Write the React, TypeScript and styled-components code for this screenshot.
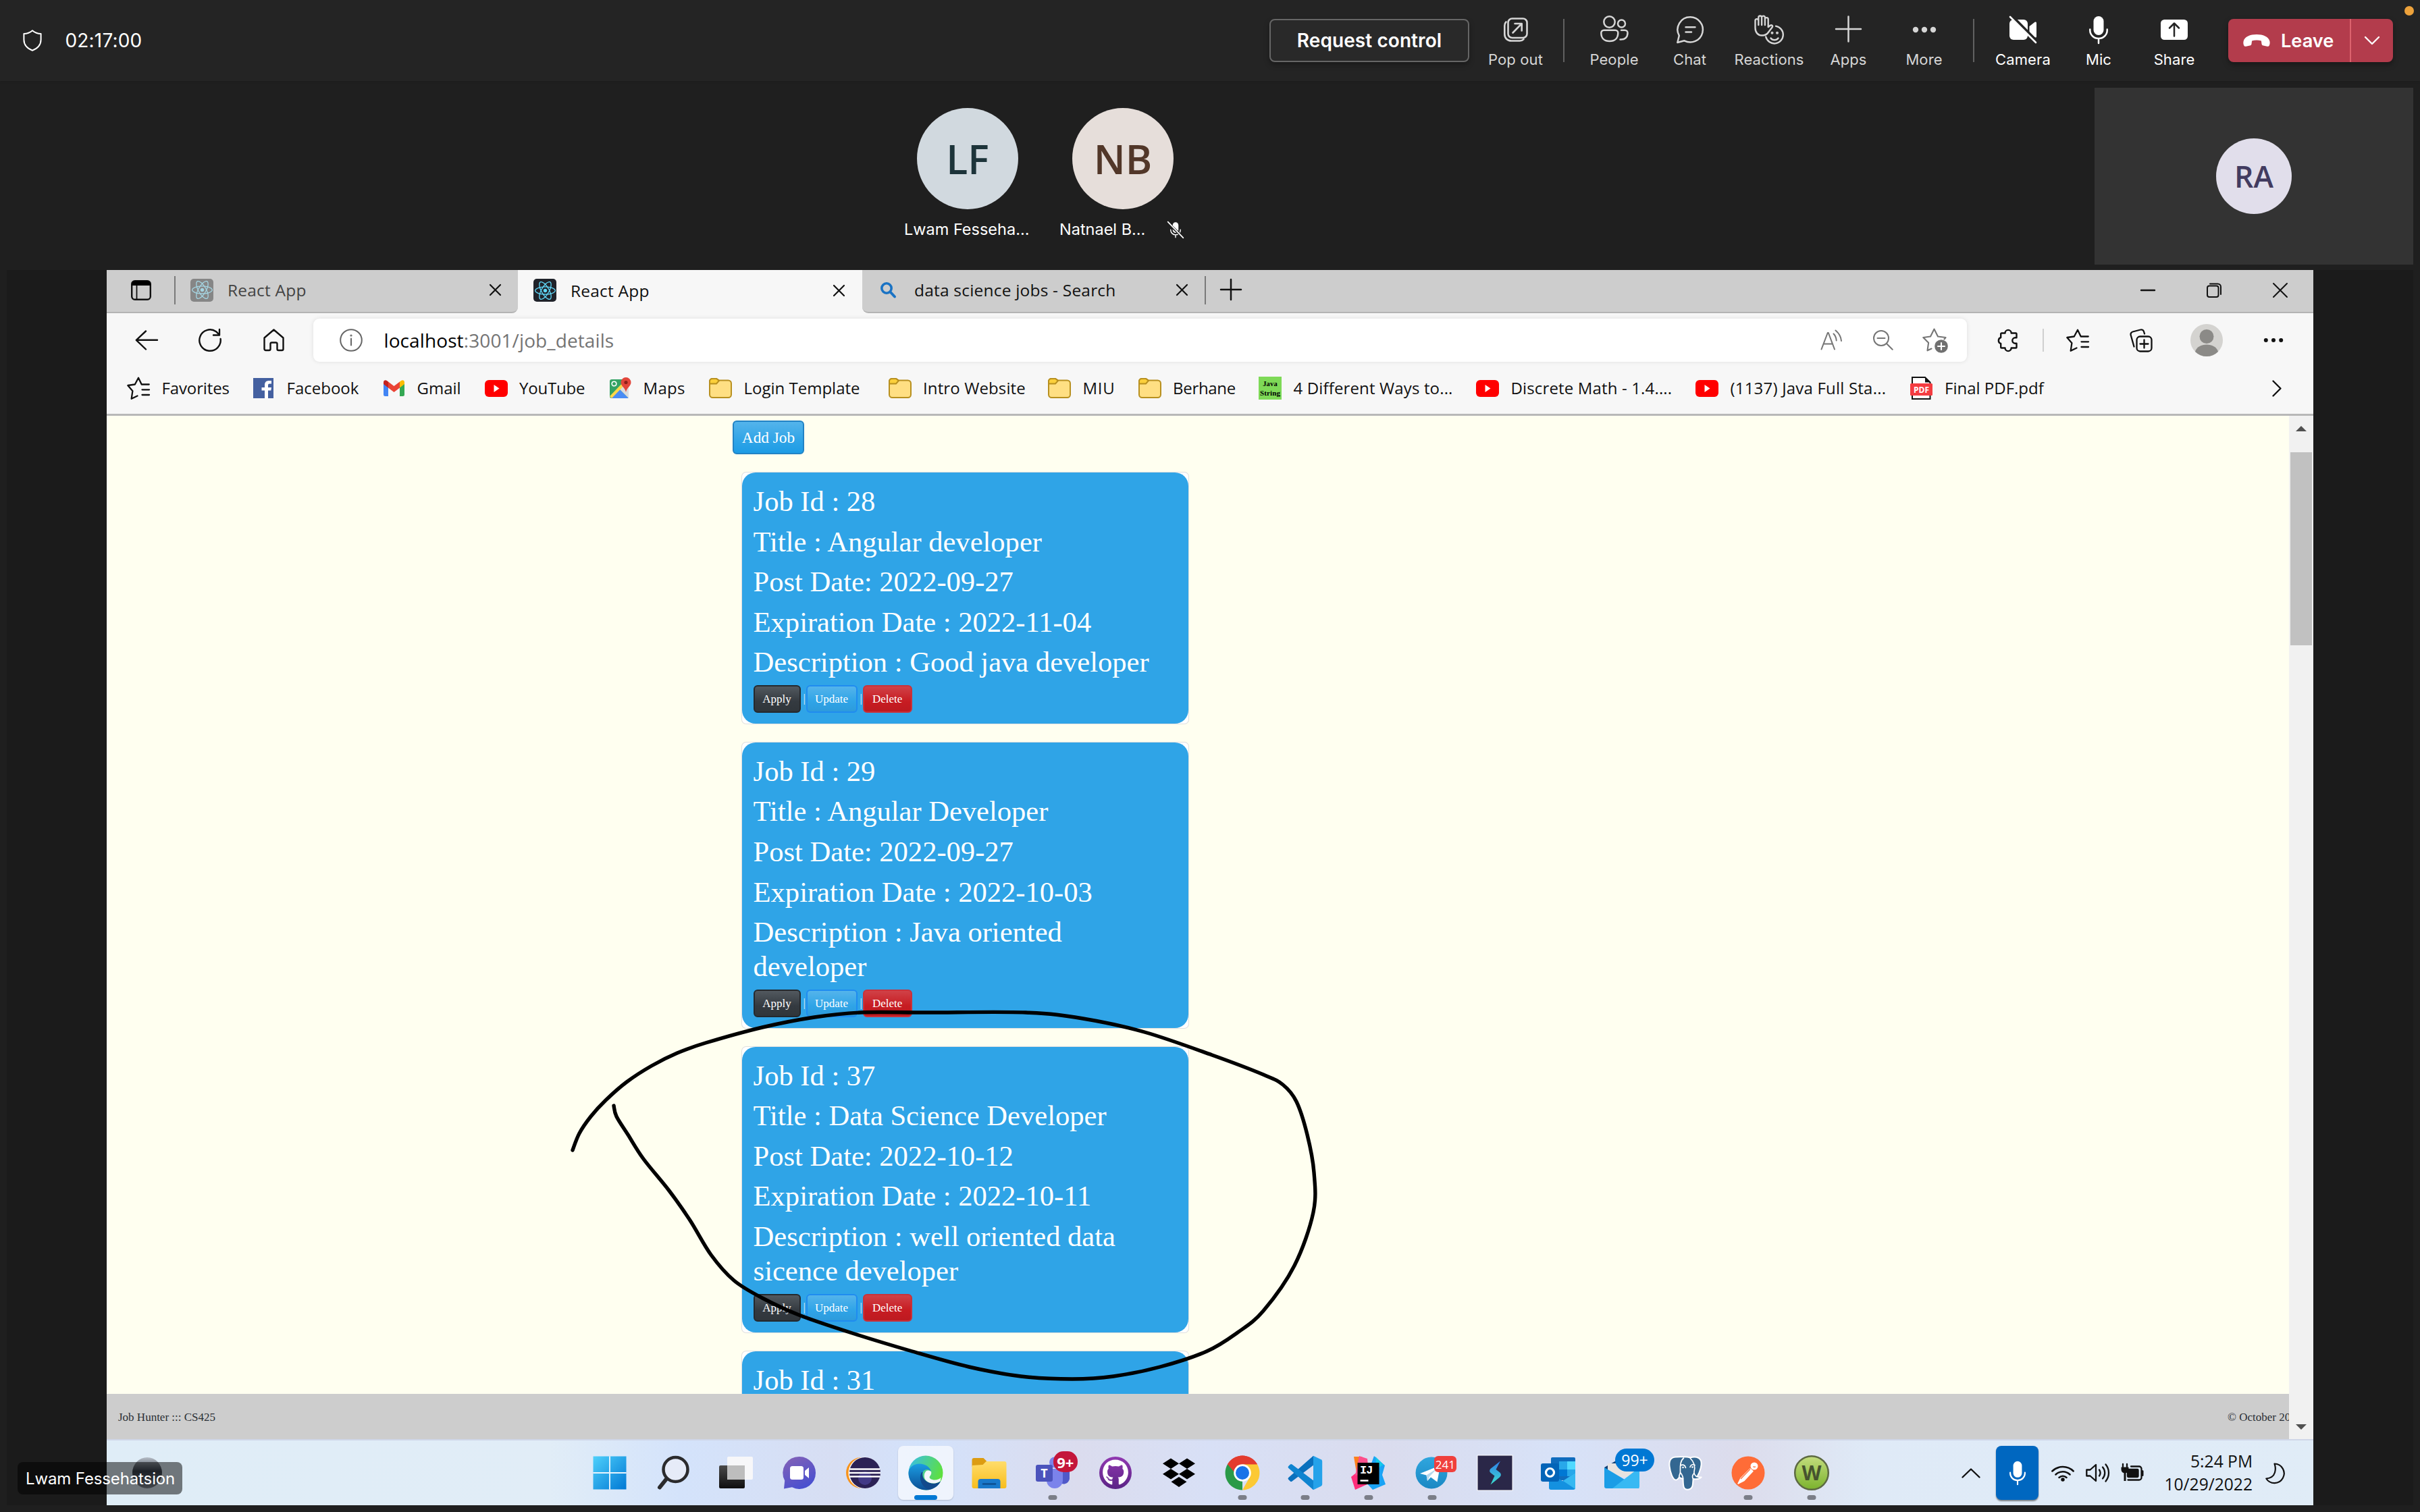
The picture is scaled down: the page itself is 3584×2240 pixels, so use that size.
import React from "react";
import styled, { createGlobalStyle, css } from "styled-components";
import { FaReact, FaGithub } from "react-icons/fa";

const UI = `"Open Sans", "Noto Sans", sans-serif`;
const MEETING = `Inter, "Noto Sans", sans-serif`;
const SERIF = `"Liberation Serif", "Times New Roman", serif`;

const GlobalStyle = createGlobalStyle`
  *, *::before, *::after { box-sizing: border-box; }
  html, body { margin: 0; padding: 0; background: #1f1f1f; }
  svg { display: block; flex: none; overflow: visible; }
  button { margin: 0; padding: 0; border: 0; background: none; font: inherit; color: inherit; }
  h6, p { margin: 0; font-weight: 400; }
`;

/* ---------- Meeting shell ---------- */

const Meeting = styled.div`
  position: relative;
  display: flex;
  flex-direction: column;
  width: 3584px;
  height: 2240px;
  overflow: hidden;
  background: #1f1f1f;
  color: #fff;
  font-family: ${MEETING};
`;

const Header = styled.header`
  display: flex;
  align-items: center;
  height: 120px;
  flex: none;
  padding: 0 40px 0 34px;
  background: #242424;
  box-shadow: 0 1px 3px rgba(0, 0, 0, 0.14);
`;

const Timer = styled.span`
  margin-left: 34.5px;
  font-size: 28px;
  letter-spacing: 0.17px;
`;

const Controls = styled.div`
  display: flex;
  align-items: center;
  margin-left: auto;
`;

const RequestButton = styled.button`
  width: 296px;
  height: 64px;
  border: 2px solid #666;
  border-radius: 8px;
  background: #292929;
  box-shadow: 0 4px 8px rgba(0, 0, 0, 0.3);
  font-size: 28px;
  font-weight: 600;
  letter-spacing: 0.08px;
`;

const Tool = styled.button<{ $width: number; $bright?: boolean }>`
  display: flex;
  flex-direction: column;
  align-items: center;
  gap: 8px;
  width: ${(p) => p.$width}px;
  height: 120px;
  padding-top: 22px;
  color: ${(p) => (p.$bright ? "#fff" : "#d6d6d6")};
  font-size: 22px;
  line-height: 28px;
  letter-spacing: 0.1px;
`;

const HeaderRule = styled.span<{ $left: number; $right: number }>`
  width: 2px;
  height: 64px;
  margin: 0 ${(p) => p.$right}px 0 ${(p) => p.$left}px;
  background: #616161;
`;

const LeaveGroup = styled.div`
  display: flex;
  width: 244px;
  height: 64px;
  margin-left: 24px;
  border-radius: 8px;
  background: #b33c4c;
  box-shadow: 0 4px 8px rgba(0, 0, 0, 0.35);
`;

const LeaveButton = styled.button`
  display: flex;
  align-items: center;
  gap: 16px;
  width: 182px;
  padding-left: 22px;
  border-right: 2px solid #dc626d;
  font-size: 27.2px;
  font-weight: 600;
`;

const LeaveMenu = styled.button`
  display: flex;
  flex: 1;
  align-items: center;
  justify-content: center;
`;

const RecordingDot = styled.span`
  position: absolute;
  top: 9px;
  right: 9px;
  width: 14px;
  height: 14px;
  border-radius: 50%;
  background: #eda23b;
`;

const Roster = styled.section`
  display: flex;
  height: 280px;
  flex: none;
  gap: 30px;
  padding: 10px 10px 8px 1333px;
`;

const Person = styled.div`
  width: 200px;
  padding-top: 30px;
`;

const Avatar = styled.div<{ $size: number; $bg: string; $fg: string; $font: number }>`
  display: flex;
  align-items: center;
  justify-content: center;
  width: ${(p) => p.$size}px;
  height: ${(p) => p.$size}px;
  margin: 0 auto;
  padding-bottom: 1px;
  border-radius: 50%;
  background: ${(p) => p.$bg};
  color: ${(p) => p.$fg};
  font: 600 ${(p) => p.$font}px ${UI};
`;

const PersonName = styled.div`
  display: flex;
  align-items: center;
  justify-content: space-between;
  margin-top: 15px;
  padding: 0 10px 0 6px;
  font-size: 23.5px;
  line-height: 30px;
  white-space: nowrap;
`;

const SelfTile = styled.div`
  display: flex;
  align-items: center;
  width: 472px;
  height: 262px;
  margin-left: auto;
  background: #333;
`;

const Stage = styled.main`
  height: 1830px;
  flex: none;
  margin: 0 10px;
  padding: 0 148px;
  background: #1b1b1b;
`;

const SharedScreen = styled.div`
  display: flex;
  flex-direction: column;
  height: 100%;
  color: #111;
  font-family: ${UI};
`;

const PresenterTag = styled.div`
  position: absolute;
  left: 26px;
  top: 2166px;
  display: flex;
  align-items: center;
  width: 244px;
  height: 48px;
  padding-left: 12px;
  border-radius: 8px;
  background: rgba(0, 0, 0, 0.5);
  font-size: 24px;
  letter-spacing: -0.13px;
  white-space: nowrap;
`;

const Ink = styled.svg`
  position: absolute;
  left: 0;
  top: 0;
  pointer-events: none;
`;

/* ---------- Browser chrome ---------- */

const TabStrip = styled.div`
  display: flex;
  height: 64px;
  flex: none;
  background: #f7f7f7;
`;

const StripPart = styled.div<{ $side: "left" | "right" }>`
  display: flex;
  align-items: center;
  height: 64px;
  padding-bottom: 3px;
  border-bottom: 2px solid #b4b4b4;
  background: #cdcdcd;
  ${(p) =>
    p.$side === "left"
      ? css`
          width: 609px;
          padding-left: 36px;
          border-bottom-right-radius: 9px;
        `
      : css`
          flex: 1;
          border-bottom-left-radius: 9px;
        `}
`;

const Tab = styled.div<{ $width: number; $active?: boolean; $muted?: boolean }>`
  display: flex;
  align-items: center;
  width: ${(p) => p.$width}px;
  height: ${(p) => (p.$active ? 60 : 59)}px;
  padding: 0 ${(p) => (p.$active ? 26 : 25)}px 0 ${(p) => (p.$active ? 23 : 22)}px;
  color: ${(p) => (p.$muted ? "#444" : "#111")};
  font-size: 24.5px;
  letter-spacing: 0.2px;
  white-space: nowrap;
`;

const TabTitle = styled.span`
  flex: 1;
  padding-left: 21px;
`;

const TabRule = styled.span<{ $left?: number }>`
  width: 2px;
  height: 42px;
  margin-left: ${(p) => p.$left ?? 0}px;
  background: #7a7a7a;
`;

const Favicon = styled.span<{ $faded?: boolean }>`
  display: flex;
  align-items: center;
  justify-content: center;
  width: 34px;
  height: 34px;
  border-radius: 5px;
  background: ${(p) => (p.$faded ? "#868686" : "#20232a")};
  color: ${(p) => (p.$faded ? "#a5d5e2" : "#61dafb")};
`;

const NewTab = styled.button`
  margin-left: 22px;
`;

const WindowButtons = styled.div`
  display: flex;
  margin-left: auto;
`;

const WindowButton = styled.button`
  display: flex;
  justify-content: center;
  align-items: center;
  width: 98px;
  height: 58px;
`;

const Toolbar = styled.div`
  display: flex;
  height: 82px;
  flex: none;
  padding: 8px 0 10px 12px;
  background: #f7f7f7;
`;

const ToolbarButton = styled.button<{ $width: number }>`
  display: flex;
  align-items: center;
  justify-content: center;
  width: ${(p) => p.$width}px;
  height: 64px;
`;

const AddressBar = styled.div`
  display: flex;
  align-items: center;
  width: 2449px;
  height: 64px;
  margin: 0 13px 0 12px;
  padding: 0 9px 0 38.5px;
  border-radius: 9px;
  background: #fff;
  box-shadow: 0 0 6px rgba(0, 0, 0, 0.1);
`;

const Url = styled.span`
  flex: 1;
  padding-left: 32px;
  color: #747474;
  font-size: 28px;
  letter-spacing: 0.1px;
  b { color: #000; font-weight: 400; }
`;

const ToolbarRule = styled.span`
  width: 2px;
  height: 34px;
  margin: 15px 3px 0 5px;
  background: #cfcfcf;
`;

const Bookmarks = styled.nav`
  display: flex;
  align-items: center;
  height: 70px;
  flex: none;
  padding: 0 47px 9px 30px;
  border-bottom: 3px solid #b8b8b8;
  background: #f7f7f7;
`;

const Bookmark = styled.span<{ $width?: number; $ls?: number }>`
  display: flex;
  align-items: center;
  gap: 17.5px;
  width: ${(p) => (p.$width ? `${p.$width}px` : "auto")};
  color: #111;
  font-size: 24px;
  letter-spacing: ${(p) => p.$ls ?? 0}px;
  line-height: 32px;
  white-space: nowrap;
`;

const BookmarkIcon = styled.span`
  display: flex;
  justify-content: center;
  width: 34px;
  flex: none;
`;

const BookmarkLabel = styled.span`
  padding-bottom: 1px;
`;

const MoreBookmarks = styled.span`
  margin-left: auto;
`;

/* ---------- Job page ---------- */

const Viewport = styled.div`
  display: flex;
  height: 1516px;
  flex: none;
`;

const Page = styled.div`
  display: flex;
  flex: 1;
  flex-direction: column;
  min-width: 0;
  overflow: hidden;
  background: #fffff0;
  font-family: ${SERIF};
`;

const JobList = styled.div`
  display: flex;
  flex-direction: column;
  align-items: flex-start;
  gap: 26.2px;
  height: 1449px;
  padding: 7px 0 0 940px;
  overflow: hidden;
`;

const AddJob = styled.button`
  width: 106px;
  height: 50px;
  flex: none;
  margin-left: -13px;
  border: 2px solid #2283c5;
  border-radius: 6px;
  background: linear-gradient(#54b4eb, #2fa4e7 60%, #1d9ce5);
  color: #fff;
  font-size: 23.3px;
`;

const Card = styled.article`
  width: 663px;
  flex: none;
  border: 1.5px solid rgba(0, 0, 0, 0.125);
  border-radius: 7px;
  background: #fff;
`;

const CardBody = styled.div`
  padding: 16.8px 16.6px 15.8px;
  border-radius: 20px;
  background: #2fa4e7;
  color: #fff;
`;

const Field = styled.h6`
  margin-bottom: 8.4px;
  font-size: 42.6px;
  line-height: 51.2px;
  letter-spacing: -0.02px;
`;

const Actions = styled.div`
  display: flex;
  height: 41px;
  align-items: center;
  font-size: 17px;
`;

const tones = {
  dark: "border-color: #24292e; background: linear-gradient(#52595f, #343a40 60%, #30363b);",
  primary: "border-color: #1f8cf0; background: linear-gradient(#54b4eb, #2fa4e7 60%, #2d9bdc);",
  danger: "border-color: #c8323b; background: linear-gradient(#d04147, #c71c22 60%, #bd1a20);",
};

const ActionButton = styled.button<{ $width: number; $tone: keyof typeof tones }>`
  width: ${(p) => p.$width}px;
  height: 41px;
  border: 2px solid;
  border-radius: 6px;
  color: #fff;
  font-size: 17px;
  line-height: 38px;
  ${(p) => tones[p.$tone]}
`;

const Pipe = styled.span`
  width: 8px;
  padding-left: 4px;
  opacity: 0.85;
`;

const Footer = styled.footer`
  display: flex;
  align-items: center;
  justify-content: space-between;
  height: 67px;
  flex: none;
  padding: 3px 0 0 17px;
  background: #cdcdcd;
  color: #2b3036;
  font-size: 17px;
  white-space: nowrap;
`;

const Copyright = styled.span`
  width: 91px;
  overflow: hidden;
`;

const Scrollbar = styled.div`
  display: flex;
  flex-direction: column;
  align-items: center;
  width: 36px;
  padding: 15px 0 14px;
  background: #f1f1f1;
`;

const ScrollThumb = styled.div`
  width: 32px;
  height: 286px;
  margin: 31px 0 auto;
  background: #c1c1c1;
`;

const ScrollArrow = styled.span<{ $down?: boolean }>`
  width: 0;
  height: 0;
  border: 8.5px solid transparent;
  border-width: ${(p) => (p.$down ? "8.5px 8.5px 0" : "0 8.5px 8.5px")};
  border-color: ${(p) => (p.$down ? "#505050 transparent" : "transparent transparent #505050")};
`;

/* ---------- Taskbar ---------- */

const Taskbar = styled.div`
  display: flex;
  align-items: center;
  height: 98px;
  flex: none;
  border-top: 2px solid #cfd6e8;
  background: linear-gradient(90deg, #dfedf7 0%, #e1edf7 20%, #d4e3fb 26%, #d7def3 33%, #d3e2fb 37%, #dbdcee 44%, #d8e0f6 50%, #dadcee 58%, #d7e2f8 66%, #dcdcec 74%, #dfeaf7 80%, #e0ecf7 100%);
`;

const Weather = styled.span`
  width: 44px;
  height: 46px;
  margin-left: 38px;
  border-radius: 50%;
  background: linear-gradient(#b7bec7, #3c4450 45%, #848c97);
`;

const Apps = styled.div`
  display: flex;
  margin-left: 616px;
`;

const AppSlot = styled.span<{ $active?: boolean }>`
  position: relative;
  display: flex;
  align-items: center;
  justify-content: center;
  width: 93.7px;
  height: 80px;
  &::before {
    content: "";
    position: absolute;
    inset: 0 6px;
    border-radius: 8px;
    background: ${(p) => (p.$active ? "rgba(255,255,255,.62)" : "none")};
    box-shadow: ${(p) => (p.$active ? "0 1px 2px rgba(0,0,0,.18)" : "none")};
  }
  svg { position: relative; }
`;

const RunMark = styled.span<{ $active?: boolean }>`
  position: absolute;
  bottom: 0;
  left: 50%;
  width: ${(p) => (p.$active ? 34 : 13)}px;
  height: 7px;
  border-radius: 4px;
  background: ${(p) => (p.$active ? "#0078d4" : "#7b7e88")};
  transform: translateX(-50%);
`;

const Badge = styled.span<{ $bg: string; $w: number; $h: number; $x: number; $y: number; $font: number; $r: number; $bold?: boolean }>`
  position: absolute;
  left: ${(p) => p.$x}px;
  top: ${(p) => p.$y}px;
  display: flex;
  align-items: center;
  justify-content: center;
  width: ${(p) => p.$w}px;
  height: ${(p) => p.$h}px;
  border-radius: ${(p) => p.$r}px;
  background: ${(p) => p.$bg};
  color: #fff;
  font-size: ${(p) => p.$font}px;
  font-weight: ${(p) => (p.$bold ? 700 : 400)};
  line-height: 1;
`;

const Tray = styled.div`
  display: flex;
  align-items: center;
  margin-left: auto;
  padding-right: 43px;
`;

const MicTile = styled.span`
  display: flex;
  align-items: center;
  justify-content: center;
  width: 63px;
  height: 80px;
  margin: 0 19px 0 23px;
  border-radius: 8px;
  background: #0067c0;
  box-shadow: 0 2px 2px rgba(0, 0, 0, 0.45);
`;

const TrayIcons = styled.div`
  display: flex;
  align-items: center;
  gap: 17px;
`;

const Clock = styled.div`
  width: 142px;
  margin: 0 19px 0 19px;
  color: #111;
  font-size: 24.6px;
  line-height: 34px;
  text-align: right;
`;

/* ---------- Icons ---------- */

type LineProps = { w: number; h: number; sw?: number; c?: string; children: React.ReactNode };
const Line = ({ w, h, sw = 2.4, c = "currentColor", children }: LineProps) => (
  <svg width={w} height={h} viewBox={`0 0 ${w} ${h}`} fill="none" stroke={c} strokeWidth={sw} strokeLinecap="round" strokeLinejoin="round">
    {children}
  </svg>
);

const ShieldIcon = () => (
  <Line w={28} h={32} sw={2}>
    <path d="M14 1.2c3.5 3 8 4.7 12.6 4.9v8.7c0 7.8-4.6 12.8-12.6 16C6 27.600 1.400 22.600 1.400 14.800V6.100C6 5.900 10.500 4.200 14 1.200z" />
  </Line>
);

const PopOutIcon = () => (
  <Line w={36} h={44} sw={2.6}>
    <rect x="6.500" y="5.500" width="28" height="28.500" rx="6" />
    <path d="M3.500 10.500C2 11.800 1.300 13.600 1.300 16v12.500c0 6 4 10 10 10h12.500c2.700 0 4.500-1 5.700-2.300" />
    <path d="M13.500 26.500L26.500 13.200M16.500 13h10.200v10.500" />
  </Line>
);

const PeopleIcon = () => (
  <Line w={42} h={44} sw={2.5}>
    <circle cx="13.500" cy="10.500" r="8.200" />
    <circle cx="31.500" cy="13" r="5.500" />
    <path d="M5.300 22.800h17a4 4 0 0 1 4 4c0 7.700-4.700 12.200-12.500 12.200S1.300 34.500 1.300 26.800a4 4 0 0 1 4-4z" />
    <path d="M31 22.800h5.500a4 4 0 0 1 4 4c0 6.500-4 10.200-11 9.700" />
  </Line>
);

const ChatIcon = () => (
  <Line w={44} h={44} sw={2.5}>
    <path d="M22.300 3.300a18.600 18.600 0 1 1-8.800 35L3.300 41l2.500-10.200A18.600 18.600 0 0 1 22.300 3.300z" />
    <path d="M15.500 18.300h14M15.500 25.500h8.500" />
  </Line>
);

const ReactionsIcon = () => (
  <Line w={46} h={44} sw={2.4}>
    <path d="M2.500 19V8.500a2.400 2.400 0 0 1 4.800 0V15M7.300 8.500V3.900a2.400 2.400 0 0 1 4.800 0V15M12.100 4a2.400 2.400 0 0 1 4.800 0V15M16.900 6.500a2.400 2.400 0 0 1 4.800 0V18l3-2.300c2-1.300 4.200.500 3 2.500l-5.500 7.300C20 29 17 30.500 12.500 30.500c-6.200 0-10-4.500-10-11.500" />
    <path d="M33 16.600A13 13 0 1 1 18.200 32.500" />
    <path d="M25.500 34.500c2.600 3.700 8.400 3.700 11 0" />
    <circle cx="27.500" cy="26.800" r=".8" />
    <circle cx="35" cy="26.800" r=".8" />
  </Line>
);

const PlusIcon = ({ size = 37, box = 44, sw = 2.5 }) => (
  <Line w={size} h={box} sw={sw}>
    <path d={`M${size / 2} ${(box - size) / 2 - 1}v${size}M0 ${box / 2 - 1}h${size}`} />
  </Line>
);

const DotsIcon = ({ r = 4.200, gap = 13, h = 44, w = 36 }) => (
  <svg width={w} height={h} fill="currentColor">
    {[-1, 0, 1].map((i) => (
      <circle key={i} cx={w / 2 + i * gap} cy={h / 2} r={r} />
    ))}
  </svg>
);

const CameraOffIcon = () => (
  <svg width="40" height="44" viewBox="0 0 40 44">
    <rect x="0" y="7" width="27" height="30" rx="6" fill="#fff" />
    <path d="M29.500 17l8-6.200c1.200-.9 2.500-.3 2.500 1.200v20c0 1.500-1.300 2.100-2.500 1.200l-8-6.200z" fill="#fff" />
    <path d="M3 1l39 39.500" stroke="#242424" strokeWidth="4" />
    <path d="M1 3l38 38" stroke="#fff" strokeWidth="2.600" strokeLinecap="round" />
  </svg>
);

const MicIcon = ({ w = 28, h = 44, off = false }) => (
  <svg width={w} height={h} viewBox="0 0 28 44" fill="none" stroke="#fff" strokeLinecap="round">
    <rect x="6.500" y="2" width="15" height="28" rx="7.500" fill="#fff" stroke="none" />
    <path d="M1.300 21.500v1.500a12.700 12 0 0 0 25.400 0v-1.500M14 35.500V42" strokeWidth="2.500" />
    {off && <path d="M-7 3L35 43" stroke="#1f1f1f" strokeWidth="7" />}
    {off && <path d="M-6 1L34 43" strokeWidth="3" />}
  </svg>
);

const ShareIcon = () => (
  <svg width="40" height="44" viewBox="0 0 40 44" fill="none">
    <rect y="7" width="40" height="30" rx="5.500" fill="#fff" />
    <path d="M20 31.500V13M13 19.500l7-7 7 7" stroke="#242424" strokeWidth="2.500" strokeLinecap="round" strokeLinejoin="round" />
  </svg>
);

const HangUpIcon = () => (
  <svg width="40" height="18" viewBox="0 0 40 18" fill="#fff">
    <path d="M.6 10C2.500 3 10.500 0 20 0s17.500 3 19.400 10c.5 2.600.2 4.600-.6 6.200-.7 1.400-1.700 1.800-3.200 1.500l-5.600-1.100c-1.500-.3-2.300-1.200-2.500-2.700l-.6-4.400c-4-1.200-9.800-1.200-13.800 0l-.6 4.400c-.2 1.500-1 2.400-2.500 2.700l-5.600 1.100c-1.500.3-2.500-.1-3.200-1.500-.8-1.600-1.100-3.600-.6-6.200z" />
  </svg>
);

const CloseIcon = ({ size = 17, sw = 2.2 }) => (
  <Line w={size} h={size} sw={sw} c="#111">
    <path d={`M1 1L${size - 1} ${size - 1}M${size - 1} 1L1 ${size - 1}`} />
  </Line>
);

const TabActionsIcon = () => (
  <svg width="30" height="30" viewBox="0 0 30 30" fill="none" stroke="#111" strokeWidth="2.400">
    <rect x="1.200" y="1.200" width="27.600" height="27.600" rx="4.500" />
    <path d="M1 6a5 5 0 0 1 5-5h18a5 5 0 0 1 5 5v2H1z" fill="#000" stroke="none" />
    <path d="M8.500 8v20" strokeWidth="1.800" />
  </svg>
);

const SearchTabIcon = () => (
  <svg width="34" height="34" viewBox="0 0 34 34" fill="none" stroke="#1a73c4" strokeLinecap="round">
    <circle cx="14" cy="14" r="7.200" strokeWidth="3.600" />
    <path d="M19.500 19.500l6.500 7" strokeWidth="4" />
  </svg>
);

const RestoreIcon = () => (
  <Line w={22} h={22} sw={2} c="#111">
    <rect x="1" y="4.500" width="16.500" height="16.500" rx="3" />
    <path d="M5 1.500h11.500a4.500 4.500 0 0 1 4.500 4.500v11" />
  </Line>
);

const BackIcon = () => (
  <Line w={34} h={30} c="#111"><path d="M16 1.500L1.800 14.800 16 28.500M2 14.800h31" /></Line>
);

const ReloadIcon = () => (
  <Line w={34} h={34} c="#111">
    <path d="M32.600 15A15.700 15.700 0 1 1 26 4.200l4.500 4.500" />
    <path d="M31 1v8.500h-9" />
  </Line>
);

const HomeIcon = () => (
  <Line w={31} h={34} c="#111">
    <path d="M1.500 13.500L15.500 1.500l14 12V30a2 2 0 0 1-2 2h-5a2 2 0 0 1-2-2v-7.500a2 2 0 0 0-2-2h-6a2 2 0 0 0-2 2V30a2 2 0 0 1-2 2h-5a2 2 0 0 1-2-2z" />
  </Line>
);

const InfoIcon = () => (
  <Line w={34} h={34} sw={2} c="#666">
    <circle cx="17" cy="17" r="15.800" />
    <path d="M17 14.500v10" />
    <circle cx="17" cy="10" r=".6" />
  </Line>
);

const ReadAloudIcon = () => (
  <Line w={33} h={32} sw={2} c="#757575">
    <path d="M1.500 29.500L10.800 5h1L21 29.500M4.500 21.500h13.500M19.500 6.500c2.500 2.500 4 6 4.200 10M22.500 1.500c5 4.200 8 9.500 8.500 15.500" />
  </Line>
);

const ZoomOutIcon = () => (
  <Line w={30} h={32} sw={2} c="#757575">
    <circle cx="12" cy="13" r="11" /><path d="M20.200 21.200l8.500 8.500M6.500 13h11" />
  </Line>
);

const StarAddIcon = () => (
  <Line w={38} h={38} sw={2.1} c="#757575">
    <path d="M13.500 31.500l-6 2.800 1.600-11.500L1.300 15l10.700-1.500L17.500 2.500 23 13.500l11.500 1.500-2 2.500" />
    <circle cx="28" cy="28" r="9.800" fill="#707070" stroke="none" />
    <path d="M28 23v10M23 28h10" stroke="#fff" />
  </Line>
);

const PuzzleIcon = () => (
  <Line w={30} h={34} sw={2.4} c="#111">
    <path d="M11.500 6.500a4.600 4.600 0 0 1 9.200 0h6.500a1.300 1.300 0 0 1 1.300 1.300v5.500h-2a4.200 4.200 0 0 0 0 8.400h2v5.500a1.300 1.300 0 0 1-1.300 1.300h-6.500a4.600 4.600 0 0 1-9.200 0H6.500a1.300 1.300 0 0 1-1.300-1.300V22a4.700 4.700 0 0 1 0-9V7.800a1.300 1.300 0 0 1 1.300-1.300z" />
  </Line>
);

const StarListIcon = () => (
  <Line w={34} h={34} sw={2.3} c="#111">
    <path d="M15.500 28.500l-8.800 4.200 1.700-11.500L1.300 13l10.500-1.500L17 1.800l4.700 9.700h11M22.500 19.300h10.500M22.500 27h10.500" />
  </Line>
);

const CollectionsIcon = () => (
  <Line w={34} h={35} sw={2.3} c="#111">
    <path d="M6.500 26.500L1.700 9.500a4 4 0 0 1 2.800-5L16 1.500a4 4 0 0 1 5 2.700l1 3.300" />
    <rect x="10.500" y="11.500" width="22" height="22" rx="5" />
    <path d="M21.500 16.500v12M15.500 22.500h12" />
  </Line>
);

const ProfileIcon = () => (
  <svg width="48" height="48" viewBox="0 0 48 48">
    <circle cx="24" cy="24" r="24" fill="#d4d3d0" />
    <circle cx="24" cy="18.500" r="10.500" fill="#8b8a87" />
    <path d="M7 41c2-7 9-10.500 17-10.500S39 34 41 41a24 24 0 0 1-34 0z" fill="#8b8a87" />
  </svg>
);

const FacebookIcon = () => (
  <svg width="30" height="30" viewBox="0 0 30 30">
    <rect width="30" height="30" fill="#4460a0" />
    <path d="M17 30V18.500h-4.500V14H17v-3.500C17 6 19.500 4 23.500 4H27v4.500h-2.500c-2 0-2.500.8-2.500 2.500v3h5l-.7 4.500H22V30z" fill="#fff" />
  </svg>
);

const GmailIcon = () => (
  <svg width="31" height="24" viewBox="0 0 31 24">
    <path d="M0 3v18.500A2.500 2.500 0 0 0 2.500 24H7V10z" fill="#4285f4" />
    <path d="M31 3v18.500a2.500 2.500 0 0 1-2.500 2.500H24V10z" fill="#34a853" />
    <path d="M24 2.500L26 1c2.200-1.600 5-.5 5 2.500V6l-7 5.500z" fill="#fbbc04" />
    <path d="M7 2.500L5 1C2.800-.6 0 .5 0 3.500V6l7 5.500z" fill="#c5221f" />
    <path d="M7 2.500L15.500 9 24 2.500v9L15.500 18 7 11.500z" fill="#ea4335" />
  </svg>
);

const YouTubeIcon = () => (
  <svg width="34" height="25" viewBox="0 0 34 25">
    <rect width="34" height="25" rx="6" fill="#f00" /><path d="M13.500 7v11l8-5.500z" fill="#fff" />
  </svg>
);

const MapsIcon = () => (
  <svg width="31" height="32" viewBox="0 0 31 32">
    <rect y="3" width="28" height="28" rx="3" fill="#34a364" />
    <path d="M14 17L28 31H2z" fill="#4a8cf5" />
    <path d="M28 6v25L14 17 24 6z" fill="#dcdcdc" />
    <path d="M0 28L24 3l4 2L3 31z" fill="#fdd84b" />
    <circle cx="6.500" cy="9.500" r="3.300" fill="none" stroke="#fff" strokeWidth="1.600" />
    <path d="M24 0a7.500 7.500 0 0 1 7.500 7.500C31.500 13 25.500 15 24 22c-1.500-7-7.500-9-7.500-14.500A7.500 7.500 0 0 1 24 0z" fill="#e2453a" />
    <circle cx="24" cy="7.500" r="2.600" fill="#8c2018" />
  </svg>
);

const FolderIcon = () => (
  <svg width="34" height="30" viewBox="0 0 34 30" stroke="#b8901f" strokeWidth="2">
    <path d="M1 5a4 4 0 0 1 4-4h6l4 2.500h13.500a4.500 4.500 0 0 1 4.500 4.500v16.500a4.500 4.500 0 0 1-4.500 4.500h-23A4.500 4.500 0 0 1 1 24.500z" fill="#ffdf83" />
    <path d="M1 5a4 4 0 0 1 4-4h6l4 3-4 4.500H1z" fill="#fbcf3b" />
  </svg>
);

const JavaStringIcon = () => (
  <svg width="34" height="34" viewBox="0 0 34 34" fontFamily="Liberation Serif, serif" fontWeight="700" textAnchor="middle">
    <rect width="34" height="34" fill="#7ed957" />
    <text x="17" y="13.500" fontSize="10.500">Java</text>
    <text x="17" y="28" fontSize="11">String</text>
  </svg>
);

const PdfIcon = () => (
  <svg width="33" height="34" viewBox="0 0 33 34">
    <path d="M3 1h19l7.500 7.500V33H3z" fill="#fff" stroke="#111" strokeWidth="2" />
    <path d="M22 1v7.500h7.500z" fill="#111" />
    <rect y="10" width="33" height="18" rx="1.500" fill="#f43c41" />
    <text x="16.500" y="23.500" fill="#fff" fontFamily="Open Sans, sans-serif" fontWeight="700" fontSize="12" textAnchor="middle">PDF</text>
  </svg>
);

const Chevron = ({ d, w, h, c = "#111", sw = 2.4 }: { d: string; w: number; h: number; c?: string; sw?: number }) => (
  <Line w={w} h={h} c={c} sw={sw}><path d={d} /></Line>
);

/* taskbar apps */

const Tile = ({ children }: { children: React.ReactNode }) => (
  <svg width="52" height="52" viewBox="0 0 52 52">{children}</svg>
);

const Grad = ({ id, from, to, x2 = 0, y2 = 1 }: { id: string; from: string; to: string; x2?: number; y2?: number }) => (
  <linearGradient id={id} x1="0" y1="0" x2={x2} y2={y2}>
    <stop stopColor={from} /><stop offset="1" stopColor={to} />
  </linearGradient>
);

const WindowsLogo = () => (
  <Tile>
    <Grad id="win" from="#4fd0fb" to="#0078d4" x2={1} />
    <path d="M1.500 1.500h24v24h-24zM26.500 1.500h24v24h-24zM1.500 26.500h24v24h-24zM26.500 26.500h24v24h-24z" fill="url(#win)" />
    <path d="M26 1.500v49M1.500 26h49" stroke="#e8f4fd" strokeWidth="1.800" />
  </Tile>
);

const SearchLogo = () => (
  <Tile>
    <circle cx="29.500" cy="21" r="18" fill="#e6ebf8" stroke="#2b2b2d" strokeWidth="4.500" />
    <path d="M16 35L6 47.500" stroke="#2b2b2d" strokeWidth="6" strokeLinecap="round" />
  </Tile>
);

const TaskViewLogo = () => (
  <Tile>
    <Grad id="tv" from="#4a4a4a" to="#0e0e0e" />
    <rect x="1" y="15" width="38" height="34" rx="2" fill="url(#tv)" />
    <rect x="13" y="2" width="38" height="34" rx="2" fill="#f7f7f9" />
    <rect x="13" y="15" width="26" height="21" fill="#bdbdbd" />
  </Tile>
);

const ChatLogo = () => (
  <Tile>
    <Grad id="chat" from="#8662b5" to="#4a50cf" x2={0.500} />
    <path d="M26 2a24 24 0 1 1-11 45.300L3 49.500l1.200-12A24 24 0 0 1 26 2z" fill="url(#chat)" />
    <rect x="12" y="16" width="20" height="20" rx="3.500" fill="#fff" />
    <path d="M34 23l6-5v16l-6-5z" fill="#fff" />
  </Tile>
);

const EclipseLogo = () => (
  <Tile>
    <circle cx="24" cy="26" r="23" fill="#f7941e" />
    <circle cx="28" cy="26" r="23.500" fill="#fff" />
    <circle cx="29" cy="26" r="23" fill="#2c2255" />
    <circle cx="29" cy="34" r="10" fill="#433a86" />
    <path d="M6.500 20.500h45M6 26h46M6.500 31.500h45" stroke="#fff" strokeWidth="2.600" />
  </Tile>
);

const EdgeLogo = () => (
  <Tile>
    <Grad id="edgeA" from="#37bdf0" to="#5ee03f" x2={1} y2={0.400} />
    <Grad id="edgeB" from="#1b9de2" to="#0b4f96" />
    <circle cx="26" cy="26" r="25.500" fill="url(#edgeA)" />
    <path d="M.5 26C.8 17.500 9 12.500 16.500 12.500c9 0 16 5 17.500 11.500-3-3.500-7.500-4-10.500-1.500-3.500 3-3 10 1.500 14.500 6 6 16.500 6.200 23 1.500C44.500 46 36.500 51.500 27 51.500 12 51.500.3 40 .5 26z" fill="url(#edgeB)" />
    <path d="M20 25c-5 8-1 21 10 25.500 8-1 14-5 18-12-6.500 4.700-17 4.500-23-1.500-3.500-3.500-4.500-8-3.500-12z" fill="#124a8c" />
    <path d="M26 24c2-2.500 6-1.500 8 0 1 3-.5 5.500-2.500 8 0 3 4 4.500 8 4.500 3.500 0 7-1.500 9-3.500-.2 2-.5 3.500-1 5.500-6.500 4.500-16 4-21-1-3.500-3.500-3.500-10-.5-13.500z" fill="#f2f6fc" />
  </Tile>
);

const ExplorerLogo = () => (
  <Tile>
    <Grad id="exp" from="#ffdd6b" to="#f8bd1c" />
    <path d="M.5 7a3 3 0 0 1 3-3h14l5 5v8H.5z" fill="#dc9c12" />
    <path d="M.5 15l16-1 5-5h27a3 3 0 0 1 3 3v34a3 3 0 0 1-3 3h-45a3 3 0 0 1-3-3z" fill="url(#exp)" />
    <path d="M9.500 49V39a4 4 0 0 1 4-4h25a4 4 0 0 1 4 4v10z" fill="#1979cb" />
    <path d="M17 42.500h18" stroke="#0e4f90" strokeWidth="2.500" strokeLinecap="round" />
  </Tile>
);

const TeamsLogo = () => (
  <Tile>
    <circle cx="44" cy="14" r="6" fill="#5059c9" />
    <circle cx="29" cy="10.500" r="8" fill="#7b83eb" />
    <path d="M36 20h15v15a9 9 0 0 1-15 5z" fill="#5059c9" />
    <path d="M17 20h24v17a12 12 0 0 1-24 0z" fill="#7b83eb" />
    <rect x="1" y="14" width="25" height="25" rx="3" fill="#4b53bc" />
    <text x="13.500" y="33" fill="#fff" fontSize="18" fontWeight="700" fontFamily="Open Sans, sans-serif" textAnchor="middle">T</text>
  </Tile>
);

const GitHubLogo = () => (
  <Tile>
    <Grad id="gh" from="#9038b0" to="#5b2486" />
    <circle cx="26" cy="26" r="24" fill="url(#gh)" />
    <FaGithub x="6.500" y="6" width="39" height="39" size={39} color="#fff" />
  </Tile>
);

const DropboxLogo = () => (
  <Tile>
    <path d="M14 4.500L26 12.200 14 20 2 12.200zM38 4.500l12 7.700L38 20l-12-7.800zM14 20l12 7.700-12 7.800L2 27.700zM38 20l12 7.700-12 7.800-12-7.800zM26 32l11.500 7.300L26 47l-11.500-7.700z" fill="#000" />
  </Tile>
);

const ChromeLogo = () => (
  <Tile>
    <path d="M26 26L4 13.200A25.500 25.500 0 0 1 48 13.200z" fill="#e33b2e" />
    <path d="M26 26V51.500A25.500 25.500 0 0 1 4 13.200z" fill="#2a9a48" />
    <path d="M26 13.200h22A25.500 25.500 0 0 1 26 51.500L37 32z" fill="#fcc934" />
    <path d="M4 13.200L16 32.500 26 14z" fill="#2a9a48" />
    <path d="M4 13.200A25.500 25.500 0 0 1 48 13.200H26L15 26z" fill="#e33b2e" />
    <circle cx="26" cy="26" r="12.800" fill="#fff" />
    <circle cx="26" cy="26" r="10" fill="#1a73e8" />
  </Tile>
);

const VsCodeLogo = () => (
  <Tile>
    <path d="M38 .8l11.500 5.500a3 3 0 0 1 1.700 2.700v34a3 3 0 0 1-1.700 2.700L38 51.200z" fill="#24a2ea" />
    <path d="M38 .8v14L6.500 38.500a2 2 0 0 1-2.600-.1L1.300 36a2 2 0 0 1 0-3z" fill="#0a70bd" />
    <path d="M38 51.200v-14L6.500 13.500a2 2 0 0 0-2.600.1L1.300 16a2 2 0 0 0 0 3z" fill="#0f84d0" />
  </Tile>
);

const IntelliJLogo = () => (
  <Tile>
    <path d="M4 2l12 0 6 14-14 10z" fill="#fc801d" />
    <path d="M0 32l10-8 16 18-20 9z" fill="#fe2e7a" />
    <path d="M12 1l12 4 2 20L6 30z" fill="#fd4f8c" />
    <path d="M34 1l16 14-4 14 5 14-19 8L20 38z" fill="#1aa3f5" />
    <path d="M36 2l12 12-10 6z" fill="#14c8e8" />
    <rect x="9.500" y="11" width="32" height="32" fill="#000" />
    <text x="13" y="27" fill="#fff" fontSize="17" fontWeight="700" fontFamily="Liberation Mono, monospace" letterSpacing="-1">IJ</text>
    <path d="M13.500 37.500h12" stroke="#fff" strokeWidth="2.500" />
  </Tile>
);

const TelegramLogo = () => (
  <Tile>
    <Grad id="tg" from="#2fa6de" to="#1a88c4" />
    <circle cx="25" cy="26" r="23.500" fill="url(#tg)" />
    <path d="M8 27l30-12-4.500 24.500L24 32.500l-5 5.500-1.500-8.500z" fill="#fff" />
    <path d="M17.500 29.500L34 19 22 31.500 19 38z" fill="#b7d8ec" />
  </Tile>
);

const StreakLogo = () => (
  <Tile>
    <Grad id="sg" from="#2f7de8" to="#3de0d0" />
    <rect width="52" height="52" fill="#2a2748" stroke="#fff" strokeWidth="1" />
    <path d="M34 8.500L20 19.500c-2.500 2.200-2.300 5 0 6.800l5.500 4.200L19.500 43.500 33 32.500c2.500-2.200 2.500-5.200 0-7.200l-5.500-4.300z" fill="url(#sg)" />
  </Tile>
);

const OutlookLogo = () => (
  <Tile>
    <rect x="15" y="3" width="36" height="34" rx="2" fill="#0f6cbd" />
    <path d="M27 9h12v12H27z" fill="#28a8ea" /><path d="M39 9h12v12H39z" fill="#50d9ff" />
    <path d="M27 21h12v10H27z" fill="#0078d4" /><path d="M39 21h12v10H39z" fill="#28a8ea" />
    <path d="M12 26l20 12 19-12v22a3 3 0 0 1-3 3H15a3 3 0 0 1-3-3z" fill="#1491e0" />
    <path d="M33 38l18-12v24z" fill="#35b8f1" />
    <rect x="0" y="12" width="27" height="27" rx="3" fill="#0364b8" />
    <circle cx="13.500" cy="25.500" r="6" fill="none" stroke="#fff" strokeWidth="3.200" />
  </Tile>
);

const MailLogo = () => (
  <Tile>
    <path d="M0 18L26 3l26 15v8H0z" fill="#123f73" />
    <path d="M5 12h42v20H5z" fill="#e7e3e0" />
    <path d="M0 18l52 31H3a3 3 0 0 1-3-3z" fill="#1b9de6" />
    <path d="M52 18L12 49h37a3 3 0 0 0 3-3z" fill="#38b9f3" />
  </Tile>
);

const PostgresLogo = () => (
  <Tile>
    <path
      d="M13 2.500C5 2 1.500 7.500 2.500 16c1 9.500 5 20.500 9.500 20.500 2 0 3.500-2 5-4 1.500 1.500 3.500 2.200 5.500 2 .3 5 0 9 1.200 12.500 1 3 4 4.200 7.500 3.500 4-.8 5.500-3.500 5.800-8l.6-7.500c5 .8 9.500 0 12-2.500-2 .2-4.500.3-6-1C48 24 51 13.500 49 8 46.500 2 39 1.500 33.500 3.500 27 1.500 20 2.500 13 2.500z"
      fill="#336791" stroke="#fff" strokeWidth="2" strokeLinejoin="round"
    />
    <path
      d="M23.500 4C17.500 9 18.500 18 18.500 24.500c0 4-2.500 5-1.500 8M33 4c6 6 8 13 6 20-.5 3 1 5.500 3.500 7.500M22.500 34.500c.2-3.500-1-5-3.500-8.500M37.500 35c-1.500-2.500-1.500-5 1-8M19 15c3-1.800 6.500-1 7.500 3.500M40 14.500c-3-1.500-6-.8-7 3"
      fill="none" stroke="#fff" strokeWidth="1.700" strokeLinecap="round"
    />
    <circle cx="22.500" cy="18" r="1.300" fill="#fff" />
    <circle cx="36.500" cy="17.500" r="1.300" fill="#fff" />
  </Tile>
);

const PostmanLogo = () => (
  <Tile>
    <circle cx="26" cy="26" r="24.500" fill="#ff6c37" />
    <path d="M11 42l4-8 14-14 4 3.500-13 14z" fill="#fff" stroke="#fff" strokeWidth="1.500" strokeLinejoin="round" />
    <path d="M15 35l14-14.500" stroke="#ff6c37" strokeWidth="1.200" />
    <circle cx="35" cy="16" r="5.500" fill="#fff" />
    <path d="M33.500 16.500c1 1.200 2.500 1.200 3.500.3" stroke="#ff6c37" strokeWidth="1.200" fill="none" />
  </Tile>
);

const WebrootLogo = () => (
  <Tile>
    <Grad id="wr" from="#c4dd7e" to="#7bb32d" />
    <circle cx="26" cy="26" r="24.800" fill="url(#wr)" stroke="#5d6a43" strokeWidth="2.500" />
    <text x="26" y="37" fontSize="30" fontWeight="700" fill="#46532f" fontFamily="Open Sans, sans-serif" textAnchor="middle">W</text>
  </Tile>
);

const WifiIcon = () => (
  <Line w={34} h={26} sw={2.500} c="#111">
    <path d="M1.300 10.500a22.500 22.500 0 0 1 31.400 0M6.500 15.500a15 15 0 0 1 21 0M11.500 20a8 8 0 0 1 11 0" />
    <circle cx="17" cy="23" r="1.500" fill="#111" />
  </Line>
);

const SpeakerIcon = () => (
  <Line w={35} h={30} sw={2.300} c="#111">
    <path d="M1.300 10.500h5.200l8.500-7.500v24l-8.500-7.500H1.300zM20 10.500c2 2.800 2 6.200 0 9M25 6.500c4.300 5 4.300 12 0 17M29.500 2.500c6 7.500 6 17.500 0 25" />
  </Line>
);

const BatteryIcon = () => (
  <Line w={34} h={28} sw={2.300} c="#111">
    <path d="M15 4.500h12a3.500 3.500 0 0 1 3.500 3.500v13a3.500 3.500 0 0 1-3.500 3.500H10.500" />
    <rect x="10" y="9" width="15.500" height="11" rx="1" fill="#111" />
    <path d="M32 11.500v6" strokeWidth="3" />
    <path d="M.5 5.500h11V9c0 3-2 5-4 5.300V26H4.500V14.300C2.500 14 .5 12 .5 9z" fill="#111" stroke="none" />
    <path d="M3 1v4M9 1v4" />
  </Line>
);

const MoonIcon = () => (
  <Line w={28} h={30} sw={2.200} c="#111">
    <path d="M13.500 1.500a14.300 14.300 0 1 1-12.200 22c6.500-.5 11-3.500 12.700-9 1.300-4.500 1-9-.5-13z" />
  </Line>
);

/* ---------- Data ---------- */

const bookmarks: { label: string; width?: number; icon: React.ReactNode; ls?: number }[] = [
  { label: "Favorites", width: 185, icon: <StarListIcon />, ls: -0.13 },
  { label: "Facebook", width: 193, icon: <FacebookIcon /> },
  { label: "Gmail", width: 151.500, icon: <GmailIcon /> },
  { label: "YouTube", width: 183.500, icon: <YouTubeIcon />, ls: -0.200 },
  { label: "Maps", width: 149, icon: <MapsIcon />, ls: 0.300 },
  { label: "Login Template", width: 265.500, icon: <FolderIcon /> },
  { label: "Intro Website", width: 236.500, icon: <FolderIcon />, ls: 0.120 },
  { label: "MIU", width: 133.500, icon: <FolderIcon />, ls: 0.700 },
  { label: "Berhane", width: 178.500, icon: <FolderIcon />, ls: -0.300 },
  { label: "4 Different Ways to...", width: 322, icon: <JavaStringIcon />, ls: 0.140 },
  { label: "Discrete Math - 1.4....", width: 325, icon: <YouTubeIcon />, ls: 0.150 },
  { label: "(1137) Java Full Sta...", width: 317.500, icon: <YouTubeIcon />, ls: 0.200 },
  { label: "Final PDF.pdf", icon: <PdfIcon /> },
];

const jobs = [
  { id: 28, title: "Angular developer", posted: "2022-09-27", expires: "2022-11-04", text: "Good java developer" },
  { id: 29, title: "Angular Developer", posted: "2022-09-27", expires: "2022-10-03", text: "Java oriented developer" },
  { id: 37, title: "Data Science Developer", posted: "2022-10-12", expires: "2022-10-11", text: "well oriented data sicence developer" },
  { id: 31, title: "", posted: "", expires: "", text: "" },
];

const stroke: [number, number][] = [
  [848, 1704], [858, 1679], [875, 1654], [897, 1630], [928, 1603], [965, 1579], [1003, 1560], [1045, 1545], [1129, 1522], [1206, 1507],
  [1274, 1500], [1374, 1500], [1519, 1500], [1604, 1509], [1695, 1529], [1795, 1563], [1871, 1592], [1900, 1607], [1920, 1632], [1936, 1681],
  [1946, 1737], [1945, 1796], [1917, 1875], [1871, 1942], [1833, 1974], [1787, 2002], [1718, 2025], [1649, 2039],
  [1588, 2043], [1512, 2039], [1435, 2025], [1351, 2002], [1259, 1974], [1183, 1948], [1129, 1923], [1087, 1897],
  [1053, 1859], [1022, 1808], [991, 1764], [953, 1717], [930, 1681], [913, 1654], [909, 1638],
];

const smooth = (pts: [number, number][]) =>
  pts.slice(0, -1).reduce((d, p1, i) => {
    const p0 = pts[i - 1] ?? p1;
    const p2 = pts[i + 1];
    const p3 = pts[i + 2] ?? p2;
    const a = [p1[0] + (p2[0] - p0[0]) / 6, p1[1] + (p2[1] - p0[1]) / 6];
    const b = [p2[0] - (p3[0] - p1[0]) / 6, p2[1] - (p3[1] - p1[1]) / 6];
    return `${d}C${a[0]} ${a[1]} ${b[0]} ${b[1]} ${p2[0]} ${p2[1]}`;
  }, `M${pts[0][0]} ${pts[0][1]}`);

const apps: { icon: React.ReactNode; running?: boolean; active?: boolean; badge?: React.ReactNode }[] = [
  { icon: <WindowsLogo /> },
  { icon: <SearchLogo /> },
  { icon: <TaskViewLogo /> },
  { icon: <ChatLogo /> },
  { icon: <EclipseLogo /> },
  { icon: <EdgeLogo />, running: true, active: true },
  { icon: <ExplorerLogo /> },
  { icon: <TeamsLogo />, running: true, badge: <Badge $bg="#c4163a" $w={36} $h={31} $x={48} $y={8} $font={22} $r={15} $bold>9+</Badge> },
  { icon: <GitHubLogo /> },
  { icon: <DropboxLogo /> },
  { icon: <ChromeLogo />, running: true },
  { icon: <VsCodeLogo />, running: true },
  { icon: <IntelliJLogo />, running: true },
  { icon: <TelegramLogo />, running: true, badge: <Badge $bg="#f0403c" $w={33} $h={24} $x={50} $y={15} $font={17} $r={6}>241</Badge> },
  { icon: <StreakLogo /> },
  { icon: <OutlookLogo /> },
  { icon: <MailLogo />, badge: <Badge $bg="#0078d4" $w={58} $h={34} $x={37} $y={4} $font={23} $r={17}>99+</Badge> },
  { icon: <PostgresLogo /> },
  { icon: <PostmanLogo />, running: true },
  { icon: <WebrootLogo />, running: true },
];

const ReactTab = ({ faded }: { faded?: boolean }) => (
  <>
    <Favicon $faded={faded}><FaReact size={31} /></Favicon>
    <TabTitle>React App</TabTitle>
    <CloseIcon />
  </>
);

const JobCard = ({ job }: { job: (typeof jobs)[number] }) => (
  <Card>
    <CardBody>
      <Field>{`Job Id : ${job.id}`}</Field>
      {job.title && (
        <>
          <Field>{`Title : ${job.title}`}</Field>
          <Field>{`Post Date: ${job.posted}`}</Field>
          <Field>{`Expiration Date : ${job.expires}`}</Field>
          <Field>{`Description : ${job.text}`}</Field>
          <Actions>
            <ActionButton $width={70} $tone="dark">Apply</ActionButton>
            <Pipe>|</Pipe>
            <ActionButton $width={76} $tone="primary">Update</ActionButton>
            <Pipe>|</Pipe>
            <ActionButton $width={73} $tone="danger">Delete</ActionButton>
          </Actions>
        </>
      )}
    </CardBody>
  </Card>
);

export default function App() {
  return (
    <Meeting>
      <GlobalStyle />
      <Header>
        <ShieldIcon />
        <Timer>02:17:00</Timer>
        <Controls>
          <RequestButton>Request control</RequestButton>
          <Tool $width={137}><PopOutIcon />Pop out</Tool>
          <HeaderRule $left={2} $right={17.5} />
          <Tool $width={112}><PeopleIcon />People</Tool>
          <Tool $width={112}><ChatIcon />Chat</Tool>
          <Tool $width={123}><ReactionsIcon />Reactions</Tool>
          <Tool $width={112}><PlusIcon />Apps</Tool>
          <Tool $width={112}><DotsIcon />More</Tool>
          <HeaderRule $left={16.5} $right={16} />
          <Tool $width={112} $bright><CameraOffIcon />Camera</Tool>
          <Tool $width={112} $bright><MicIcon />Mic</Tool>
          <Tool $width={112} $bright><ShareIcon />Share</Tool>
          <LeaveGroup>
            <LeaveButton><HangUpIcon />Leave</LeaveButton>
            <LeaveMenu><Chevron w={22} h={12} c="#fff" d="M1 1l10 10L21 1" /></LeaveMenu>
          </LeaveGroup>
        </Controls>
      </Header>

      <Roster>
        <Person>
          <Avatar $size={150} $bg="#d1d9df" $fg="#1d343a" $font={59}>LF</Avatar>
          <PersonName>Lwam Fesseha...</PersonName>
        </Person>
        <Person>
          <Avatar $size={150} $bg="#e6deda" $fg="#523729" $font={60}>NB</Avatar>
          <PersonName>Natnael B...<MicIcon w={24} h={25} off /></PersonName>
        </Person>
        <SelfTile>
          <Avatar $size={112} $bg="#e1deeb" $fg="#423b60" $font={44.5}>RA</Avatar>
        </SelfTile>
      </Roster>

      <Stage>
        <SharedScreen>
          <TabStrip>
            <StripPart $side="left">
              <TabActionsIcon />
              <TabRule $left={34} />
              <Tab $width={507} $muted><ReactTab faded /></Tab>
            </StripPart>
            <Tab $width={510} $active><ReactTab /></Tab>
            <StripPart $side="right">
              <Tab $width={507}>
                <SearchTabIcon />
                <TabTitle>data science jobs - Search</TabTitle>
                <CloseIcon />
              </Tab>
              <TabRule />
              <NewTab><PlusIcon size={30} box={30} /></NewTab>
              <WindowButtons>
                <WindowButton><Chevron w={22} h={4} d="M1 2h20" /></WindowButton>
                <WindowButton><RestoreIcon /></WindowButton>
                <WindowButton><CloseIcon size={22} sw={2} /></WindowButton>
              </WindowButtons>
            </StripPart>
          </TabStrip>

          <Toolbar>
            <ToolbarButton $width={94}><BackIcon /></ToolbarButton>
            <ToolbarButton $width={94}><ReloadIcon /></ToolbarButton>
            <ToolbarButton $width={94}><HomeIcon /></ToolbarButton>
            <AddressBar>
              <InfoIcon />
              <Url><b>localhost</b>:3001/job_details</Url>
              <ToolbarButton $width={76.5}><ReadAloudIcon /></ToolbarButton>
              <ToolbarButton $width={76.5}><ZoomOutIcon /></ToolbarButton>
              <ToolbarButton $width={76.5}><StarAddIcon /></ToolbarButton>
            </AddressBar>
            <ToolbarButton $width={94}><PuzzleIcon /></ToolbarButton>
            <ToolbarRule />
            <ToolbarButton $width={94}><StarListIcon /></ToolbarButton>
            <ToolbarButton $width={94}><CollectionsIcon /></ToolbarButton>
            <ToolbarButton $width={100}><ProfileIcon /></ToolbarButton>
            <ToolbarButton $width={97}><DotsIcon r={3} gap={11.2} /></ToolbarButton>
          </Toolbar>

          <Bookmarks>
            {bookmarks.map((b) => (
              <Bookmark key={b.label} $width={b.width} $ls={b.ls}>
                <BookmarkIcon>{b.icon}</BookmarkIcon>
                <BookmarkLabel>{b.label}</BookmarkLabel>
              </Bookmark>
            ))}
            <MoreBookmarks><Chevron w={14} h={25} d="M1.500 1.500l11 11-11 11" /></MoreBookmarks>
          </Bookmarks>

          <Viewport>
            <Page>
              <JobList>
                <AddJob>Add Job</AddJob>
                {jobs.map((job) => (
                  <JobCard key={job.id} job={job} />
                ))}
              </JobList>
              <Footer>
                <span>Job Hunter ::: CS425</span>
                <Copyright>© October 2022</Copyright>
              </Footer>
            </Page>
            <Scrollbar>
              <ScrollArrow />
              <ScrollThumb />
              <ScrollArrow $down />
            </Scrollbar>
          </Viewport>

          <Taskbar>
            <Weather />
            <Apps>
              {apps.map((app, i) => (
                <AppSlot key={i} $active={app.active}>
                  {app.icon}
                  {app.badge}
                  {app.running && <RunMark $active={app.active} />}
                </AppSlot>
              ))}
            </Apps>
            <Tray>
              <Chevron w={28} h={15} d="M1.500 13.500L14 1.500l12.500 12" />
              <MicTile><MicIcon w={24} h={38} /></MicTile>
              <TrayIcons>
                <WifiIcon />
                <SpeakerIcon />
                <BatteryIcon />
              </TrayIcons>
              <Clock>5:24 PM<br />10/29/2022</Clock>
              <MoonIcon />
            </Tray>
          </Taskbar>
        </SharedScreen>
      </Stage>

      <PresenterTag>Lwam Fessehatsion</PresenterTag>
      <RecordingDot />
      <Ink width="3584" height="2240" viewBox="0 0 3584 2240" fill="none">
        <path d={smooth(stroke)} stroke="#000" strokeWidth="5.400" strokeLinecap="round" strokeLinejoin="round" />
      </Ink>
    </Meeting>
  );
}
